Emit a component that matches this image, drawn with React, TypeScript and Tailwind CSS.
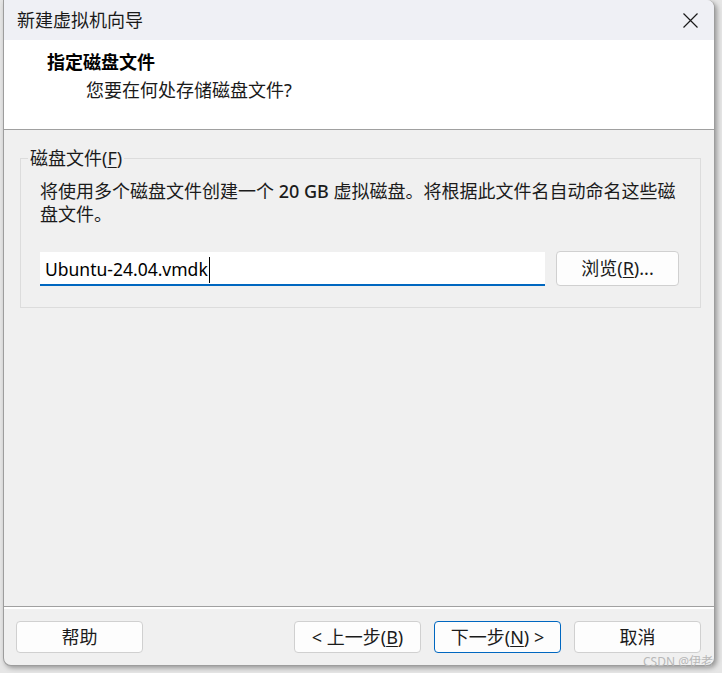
import React from "react";

const font = {
  fontFamily: '"Noto Sans", "Noto Sans CJK SC", sans-serif',
};

const Btn = ({
  children,
  primary,
  className,
}: {
  children: React.ReactNode;
  primary?: boolean;
  className?: string;
}) => (
  <div
    className={
      "flex h-[32px] w-[127px] items-center justify-center rounded-[4px] border bg-[#fdfdfd] text-[18px] text-[#1b1b1b] " +
      (primary ? "border-[#0067c0] " : "border-[#d0d0d0] ") +
      (className || "")
    }
  >
    {children}
  </div>
);

const App = () => {
  return (
    <div className="relative h-[673px] w-[722px] overflow-hidden bg-[#e6e6e6]" style={font}>
      <div className="ml-[3px] flex h-[666px] w-[712px] flex-col overflow-hidden rounded-tr-[8px] rounded-b-[8px] border-x border-b border-[#9d9d9d] bg-[#f0f0f0] shadow-[2px_2px_5px_rgba(0,0,0,0.35)]">
        {/* title bar */}
        <div className="flex h-[40px] shrink-0 items-center justify-between bg-[#eff0f5] pl-[13px] pr-[16px]">
          <span className="text-[18px] leading-none text-[#1a1a1a]">新建虚拟机向导</span>
          <svg width="15" height="15" viewBox="0 0 15 15">
            <path d="M0.5 0.5 L14.5 14.5 M14.5 0.5 L0.5 14.5" stroke="#1a1a1a" strokeWidth="1.2" />
          </svg>
        </div>

        {/* header */}
        <div className="h-[90px] shrink-0 border-b border-[#a0a0a0] bg-white pl-[43px] pt-[10px]">
          <div className="text-[18px] font-bold leading-[24px] text-black">指定磁盘文件</div>
          <div className="ml-[39px] mt-[4px] text-[18px] leading-[24px] text-[#1a1a1a]">
            您要在何处存储磁盘文件?
          </div>
        </div>

        {/* body */}
        <div className="flex-1 px-[16px] pt-[17px]">
          <fieldset className="h-[161px] w-[681px] border border-[#dcdcdc] px-0">
            <legend className="ml-[7px] px-[2px] text-[18px] leading-[22px] text-[#1b1b1b]">
              磁盘文件(<span className="underline underline-offset-2">F</span>)
            </legend>
            <div className="px-[19px]">
              <div className="mt-[11px] text-[18px] leading-[23px] text-[#1b1b1b]">
                <div className="whitespace-nowrap">
                  将使用多个磁盘文件创建一个 <span className="font-medium">20 GB</span> 虚拟磁盘。将根据此文件名自动命名这些磁
                </div>
                <div>盘文件。</div>
              </div>
              <div className="mt-[25px] flex items-end gap-[11px]">
                <div className="flex h-[34px] w-[505px] items-center border-b-2 border-[#0067c0] bg-white pl-[5px] pt-[3px] text-[17.5px] text-black">
                  <span>Ubuntu-24.04.vmdk</span>
                  <span className="ml-[1px] h-[26px] w-px bg-black" />
                </div>
                <div className="flex h-[35px] w-[123px] items-center justify-center rounded-[4px] border border-[#d0d0d0] bg-[#fdfdfd] text-[18px] text-[#1b1b1b]">
                  浏览(<span className="underline underline-offset-2">R</span>)...
                </div>
              </div>
            </div>
          </fieldset>
        </div>

        {/* footer */}
        <div className="h-[59px] shrink-0 border-t border-[#a0a0a0]">
          <div className="flex h-full items-start border-t-2 border-white pl-[12px] pt-[12px]">
            <Btn>帮助</Btn>
            <Btn className="ml-[151px]">
              &lt; 上一步(<span className="underline underline-offset-2">B</span>)
            </Btn>
            <Btn primary className="ml-[13px]">
              下一步(<span className="underline underline-offset-2">N</span>) &gt;
            </Btn>
            <Btn className="ml-[13px]">取消</Btn>
          </div>
        </div>
      </div>

      {/* watermark */}
      <div className="absolute bottom-[5px] right-[9px] text-[12px] leading-none text-[#b8b8b8]">
        CSDN @伊老
      </div>
    </div>
  );
};

export default App;
